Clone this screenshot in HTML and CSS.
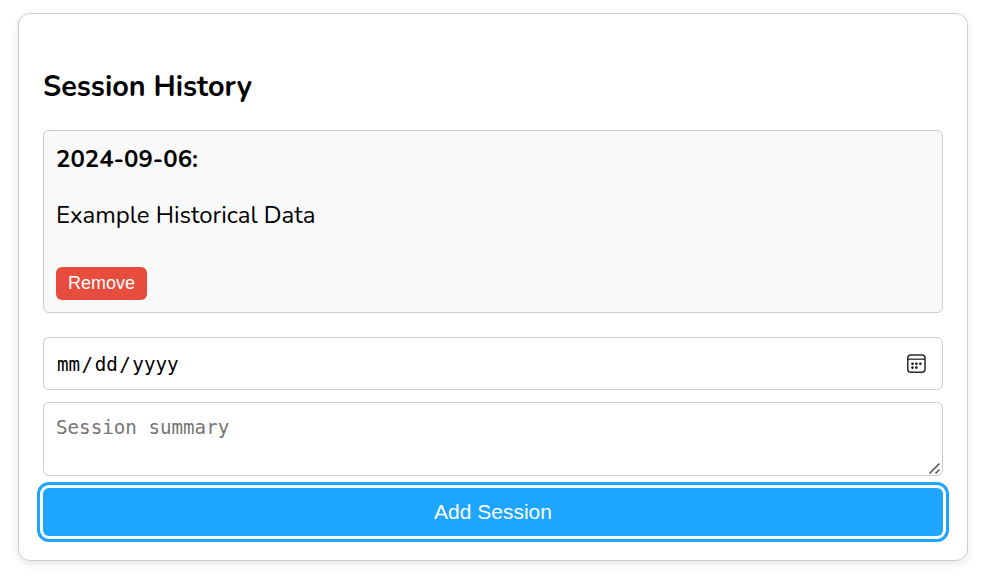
FILE: index.html
```html
<!DOCTYPE html>
<html lang="en">
<head>
<meta charset="utf-8">
<title>Session History</title>
<link rel="stylesheet" href="styles.css">
</head>
<body>
<main class="card">
  <h2 class="title">Session History</h2>
  <section class="entry">
    <strong class="entry-date">2024-09-06:</strong>
    <p class="entry-text">Example Historical Data</p>
    <button class="remove" type="button">Remove</button>
  </section>
  <div class="field date-field">
    <div class="date-parts"><span class="part">mm</span><span class="slash">/</span><span class="part">dd</span><span class="slash">/</span><span class="part">yyyy</span></div>
    <svg class="calendar" width="20" height="20" viewBox="0 0 20 20">
      <rect x="1.75" y="1" width="17.25" height="17.25" rx="3" fill="none" stroke="#2a2a2a" stroke-width="1.5"/>
      <path d="M1.5 5.2H19" stroke="#2a2a2a" stroke-width="1.3"/>
      <g fill="#111"><circle cx="6.5" cy="9.7" r="1.3"/><circle cx="10.4" cy="9.7" r="1.3"/><circle cx="14.3" cy="9.7" r="1.3"/><circle cx="6.5" cy="13.6" r="1.3"/><circle cx="10.4" cy="13.6" r="1.3"/></g>
    </svg>
  </div>
  <div class="field summary-field">
    <span class="placeholder">Session summary</span>
    <svg class="grip" width="13" height="13" viewBox="0 0 13 13"><path d="M1.5 11.5L11.5 1.5M7.5 11.5L11.5 7.5" stroke="#505050" stroke-width="1.5"/></svg>
  </div>
  <button class="add" type="button">Add Session</button>
</main>
</body>
</html>
```
FILE: styles.css
```css
* { box-sizing: border-box; }
body {
  margin: 0;
  padding: 13px 19px 16px 18px;
  background: #fff;
  color: #000;
  font-family: "Nunito", "Noto Sans", sans-serif;
}
.card {
  display: flex;
  flex-direction: column;
  height: 548px;
  padding: 53px 24px 24px;
  border: 1px solid #ccc;
  border-radius: 12px;
  box-shadow: 0 3px 9px rgba(0, 0, 0, 0.1);
}
.title {
  margin: 0 0 23px;
  height: 40px;
  line-height: 40px;
  font-size: 28.8px;
  font-weight: 700;
  white-space: nowrap;
}
.entry {
  display: flex;
  flex-direction: column;
  align-items: flex-start;
  height: 183px;
  padding: 12px;
  margin-bottom: 24px;
  border: 1px solid #ccc;
  border-radius: 6px;
  background: #f9f9f9;
  font-size: 24px;
  line-height: 32px;
}
.entry-date { font-weight: 700; }
.entry-text { margin: 24px 0 36px; }
.remove {
  width: 91px;
  height: 33px;
  padding: 0;
  border: 0;
  border-radius: 6px;
  background: #e74c3c;
  color: #fff;
  font: 18px/33px "Liberation Sans", sans-serif;
}
.field {
  display: flex;
  justify-content: space-between;
  border: 1px solid #ccc;
  border-radius: 6px;
  font: 19.2px/26px "DejaVu Sans Mono", monospace;
}
.date-field {
  align-items: center;
  height: 53px;
  padding: 0 16px 0 13px;
  margin-bottom: 12px;
}
.date-parts {
  display: flex;
  gap: 1.5px;
  padding-top: 2px;
}
.summary-field {
  height: 74px;
  padding: 12px 1px 0 12px;
  margin-bottom: 12px;
}
.placeholder { color: #757575; }
.grip { align-self: flex-end; }
.add {
  height: 48px;
  flex: none;
  padding: 0;
  border: 0;
  border-radius: 6px;
  outline: 3px solid #1ea5ff;
  outline-offset: 3px;
  background: #1ea5ff;
  color: #fff;
  font: 21px/48px "Liberation Sans", sans-serif;
}
```
